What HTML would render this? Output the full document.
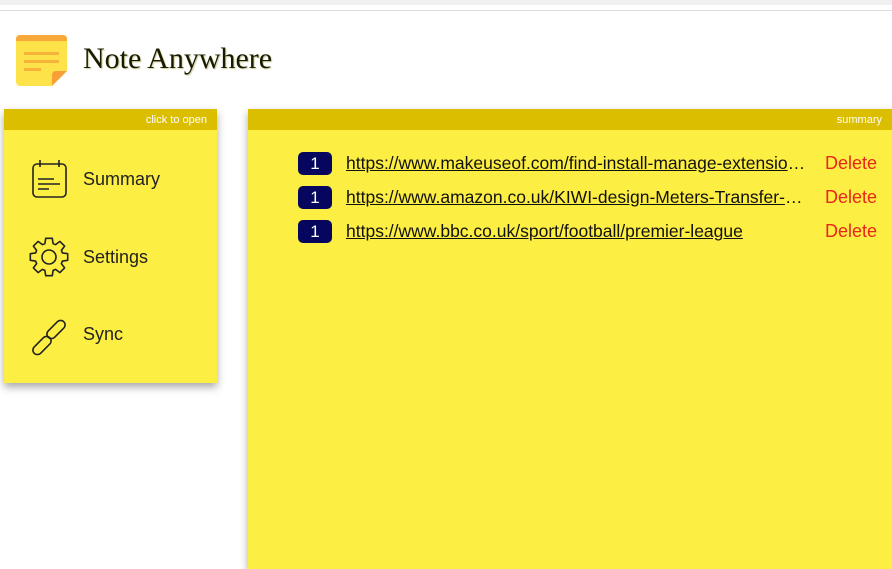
<!DOCTYPE html>
<html><head><style>
body{margin:0;width:892px;height:557px;background:#fff;position:relative;overflow:hidden;font-family:"Liberation Sans",sans-serif}
.top{position:absolute;left:0;top:0;width:892px;height:5px;background:#f0f0f0}
.line{position:absolute;left:0;top:10px;width:892px;height:1px;background:#ddd}
.title{position:absolute;left:83px;top:42px;font-family:"Liberation Serif",serif;font-size:30px;color:#1a1a00;text-shadow:1px 1px 1px #cc9}
.card{position:absolute;background:#fdee43;box-shadow:0 4px 8px rgba(0,0,0,.35)}
.hd{height:21px;background:#dcbe00;color:#fff;font-size:11px;text-align:right;line-height:22px;padding-right:10px}
.item{position:absolute;left:83px;font-size:18px;color:#222}
.ic{position:absolute}
.row{position:absolute;left:298px;height:23px;width:600px}
.b{position:absolute;left:0;top:0;width:34px;height:23px;background:#06065e;border-radius:5px;color:#fff;text-align:center;line-height:23px;font-size:17px}
.u{position:absolute;left:48px;top:1px;font-size:17.5px;color:#111;text-decoration:underline;white-space:nowrap;max-width:460px;overflow:hidden;text-overflow:ellipsis}
.d{position:absolute;left:527px;top:1px;font-size:18px;color:#e8261a}
</style></head><body>
<div class="top"></div><div class="line"></div>
<svg class="ic" style="left:16px;top:35px" width="51" height="51" viewBox="0 0 51 51">
<path d="M4 0H47a4 4 0 0 1 4 4V36L36 51H4a4 4 0 0 1-4-4V4a4 4 0 0 1 4-4z" fill="#fde24a"/>
<path d="M4 0H47a4 4 0 0 1 4 4V6H0V4a4 4 0 0 1 4-4z" fill="#f9a93a"/>
<path d="M51 36L36 51V40a4 4 0 0 1 4-4z" fill="#f7a038"/>
<rect x="8" y="17" width="35" height="3" fill="#f7b23a"/><rect x="8" y="25" width="35" height="3" fill="#f7b23a"/><rect x="8" y="33" width="17" height="3" fill="#f7b23a"/>
</svg>
<div class="title">Note Anywhere</div>
<div class="card" style="left:4px;top:109px;width:213px;height:274px"><div class="hd">click to open</div></div>
<svg class="ic" style="left:28px;top:158px" width="42" height="42" viewBox="0 0 42 42" fill="none" stroke="#222" stroke-width="1.6">
<rect x="5" y="6" width="33" height="33" rx="4"/><path d="M12 2v7M31 2v7M10 21h16M10 26h22M10 31h11"/></svg>
<div class="item" style="top:169px">Summary</div>
<svg class="ic" style="left:28px;top:236px" width="42" height="42" viewBox="0 0 42 42" fill="none" stroke="#222" stroke-width="1.6" stroke-linejoin="round">
<path d="M34.4 16.9L39.7 17.7L39.7 24.3L34.4 25.1L33.4 27.6L36.6 31.9L31.9 36.6L27.6 33.4L25.1 34.4L24.3 39.7L17.7 39.7L16.9 34.4L14.4 33.4L10.1 36.6L5.4 31.9L8.6 27.6L7.6 25.1L2.3 24.3L2.3 17.7L7.6 16.9L8.6 14.4L5.4 10.1L10.1 5.4L14.4 8.6L16.9 7.6L17.7 2.3L24.3 2.3L25.1 7.6L27.6 8.6L31.9 5.4L36.6 10.1L33.4 14.4Z"/><circle cx="21" cy="21" r="7"/></svg>
<div class="item" style="top:247px">Settings</div>
<svg class="ic" style="left:28px;top:315px" width="42" height="42" viewBox="0 0 42 42" fill="none" stroke="#222" stroke-width="1.6">
<rect x="3" y="26" width="22" height="9" rx="4.5" transform="rotate(-45 14 30.5)"/>
<rect x="17" y="10" width="22" height="9" rx="4.5" transform="rotate(-45 28 14.5)"/>
</svg>
<div class="item" style="top:324px">Sync</div>
<div class="card" style="left:248px;top:109px;width:650px;height:460px"><div class="hd" style="padding-right:16px">summary</div></div>
<div class="row" style="top:152px"><div class="b">1</div><div class="u">https://www.makeuseof.com/find-install-manage-extensions-chrome</div><div class="d">Delete</div></div>
<div class="row" style="top:186px"><div class="b">1</div><div class="u">https://www.amazon.co.uk/KIWI-design-Meters-Transfer-Cable</div><div class="d">Delete</div></div>
<div class="row" style="top:220px"><div class="b">1</div><div class="u">https://www.bbc.co.uk/sport/football/premier-league</div><div class="d">Delete</div></div>
</body></html>
